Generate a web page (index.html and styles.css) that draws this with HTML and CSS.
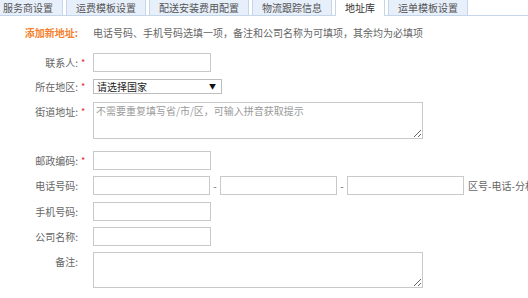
FILE: index.html
```html
<!DOCTYPE html>
<html lang="zh-CN">
<head>
<meta charset="utf-8">
<title>地址库</title>
<link rel="stylesheet" href="styles.css">
</head>
<body>
<div class="tabs">
  <div class="tab">服务商设置</div>
  <div class="tab">运费模板设置</div>
  <div class="tab">配送安装费用配置</div>
  <div class="tab">物流跟踪信息</div>
  <div class="tab active">地址库</div>
  <div class="tab">运单模板设置</div>
</div>
<div class="form">
  <div class="row head">
    <span class="lbl title">添加新地址:</span><span class="req"></span>
    <span class="desc">电话号码、手机号码选填一项，备注和公司名称为可填项，其余均为必填项</span>
  </div>
  <div class="row r1">
    <span class="lbl">联系人:</span><span class="req">*</span>
    <input class="txt" type="text">
  </div>
  <div class="row r2">
    <span class="lbl">所在地区:</span><span class="req">*</span>
    <span class="sel"><span>请选择国家</span><span class="arr">▼</span></span>
  </div>
  <div class="row r3 top">
    <span class="lbl">街道地址:</span><span class="req">*</span>
    <textarea class="area" placeholder="不需要重复填写省/市/区，可输入拼音获取提示"></textarea>
  </div>
  <div class="row r4">
    <span class="lbl">邮政编码:</span><span class="req">*</span>
    <input class="txt" type="text">
  </div>
  <div class="row r5">
    <span class="lbl">电话号码:</span><span class="req"></span>
    <input class="txt" type="text"><span class="sep">-</span><input class="txt" type="text"><span class="sep">-</span><input class="txt" type="text"><span class="hint">区号-电话-分机</span>
  </div>
  <div class="row r6">
    <span class="lbl">手机号码:</span><span class="req"></span>
    <input class="txt" type="text">
  </div>
  <div class="row r7">
    <span class="lbl">公司名称:</span><span class="req"></span>
    <input class="txt" type="text">
  </div>
  <div class="row r8 top">
    <span class="lbl">备注:</span><span class="req"></span>
    <textarea class="area note"></textarea>
  </div>
</div>
</body>
</html>
```
FILE: styles.css
```css
html, body {
  margin: 0;
  padding: 0;
  background: #fff;
  overflow: hidden;
}
body {
  font-family: "Noto Sans CJK SC", "Microsoft YaHei", sans-serif;
  font-size: 10px;
  line-height: 14px;
  color: #666;
  width: 528px;
  height: 298px;
}
.tabs {
  display: flex;
  align-items: flex-end;
  margin: -2px 0 0 -7px;
  border-bottom: 1px solid #c5d5ea;
  white-space: nowrap;
}
.tab {
  height: 16px;
  line-height: 17px;
  padding: 0 9px;
  margin-right: 3px;
  border: 1px solid #c5d5ea;
  border-bottom: none;
  background: #e7effa;
  color: #555;
}
.tab.active {
  background: #fff;
  height: 17px;
  margin-bottom: -1px;
  color: #333;
}
.form {
  padding-top: 10px;
}
.row {
  display: flex;
  align-items: center;
  white-space: nowrap;
}
.row.top {
  align-items: flex-start;
}
.row.top .lbl, .row.top .req {
  padding-top: 3px;
}
.lbl {
  width: 78px;
  text-align: right;
  flex: none;
}
.title {
  color: #f5812e;
  font-weight: bold;
}
.req {
  width: 15px;
  flex: none;
  color: #e8262b;
  font-size: 9px;
  padding-left: 3px;
  box-sizing: border-box;
}
.desc {
  color: #666;
}
.r1 { margin-top: 13px; }
.r2 { margin-top: 7px; }
.r3 { margin-top: 8px; }
.r4 { margin-top: 12px; }
.r5 { margin-top: 6px; }
.r6 { margin-top: 7px; }
.r7 { margin-top: 6px; }
.r8 { margin-top: 6px; }
.txt {
  box-sizing: border-box;
  width: 118px;
  height: 19px;
  margin: 0;
  padding: 0 3px;
  border: 1px solid #c9c9c9;
  background: #fff;
  font: inherit;
  outline: none;
  flex: none;
}
.r5 .txt {
  width: 117px;
}
.sel {
  box-sizing: border-box;
  width: 129px;
  height: 15px;
  border: 1px solid #bdbdbd;
  display: flex;
  align-items: center;
  justify-content: space-between;
  padding: 0 5px 0 3px;
  color: #222;
  background: #fff;
  line-height: 13px;
}
.arr {
  font-size: 7px;
  color: #111;
}
.area {
  box-sizing: border-box;
  width: 330px;
  height: 37px;
  margin: 0;
  padding: 1px 2px;
  border: 1px solid #c9c9c9;
  font: inherit;
  line-height: 14px;
  color: #333;
  resize: both;
  outline: none;
}
.area::placeholder {
  color: #9a9a9a;
}
.note {
  height: 36px;
}
.sep {
  width: 10px;
  text-align: center;
  flex: none;
}
.hint {
  margin-left: 4px;
  color: #666;
}
```
